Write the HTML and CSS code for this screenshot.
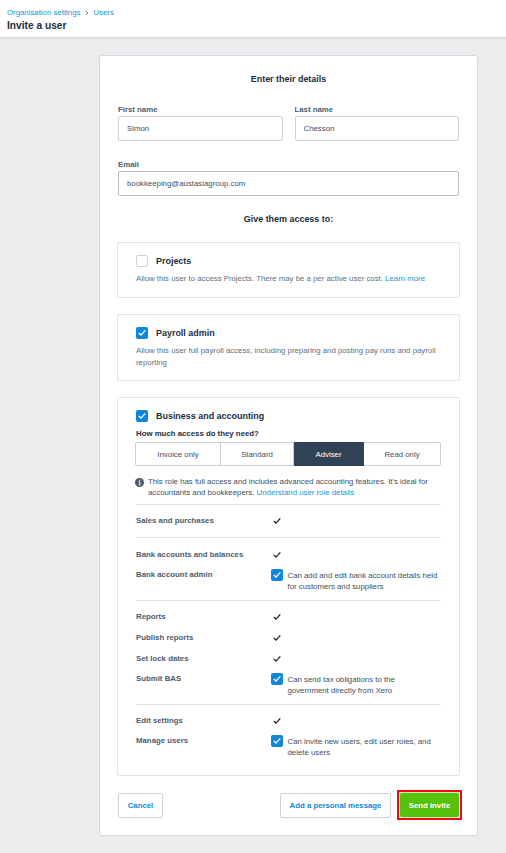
FILE: index.html
```
<!DOCTYPE html>
<html lang="en">
<head>
    <meta charset="UTF-8">
    <meta name="viewport" content="width=device-width, initial-scale=1">
    <title>Invite a user</title>
    <link rel="stylesheet" href="styles.css">
</head>
<body>
    <svg class="symbols" width="0" height="0">
        <symbol id="tick" viewBox="0 0 12 12">
            <path d="M2.8 6.1 L5 8.1 L9.3 3.4" fill="none" stroke="currentColor" stroke-width="1.4"/>
        </symbol>
    </svg>

    <header>
        <nav class="breadcrumb">
            <a href="#">Organisation settings</a>
            <svg class="chevron" viewBox="0 0 4 6"><path d="M1 1 L3 3 L1 5" fill="none" stroke="currentColor" stroke-width="0.8"/></svg>
            <a href="#">Users</a>
        </nav>
        <h1>Invite a user</h1>
    </header>

    <main class="card">
        <h2>Enter their details</h2>

        <div class="name-row">
            <div class="field">
                <label for="firstName">First name</label>
                <input type="text" id="firstName" value="Simon">
            </div>
            <div class="field">
                <label for="lastName">Last name</label>
                <input type="text" id="lastName" value="Chesson">
            </div>
        </div>
        <div class="field email-field">
            <label for="email">Email</label>
            <input type="text" id="email" value="bookkeeping@austasiagroup.com">
        </div>

        <h2 class="access-title">Give them access to:</h2>

        <section class="box projects">
            <div class="box-title">
                <span class="checkbox"></span>
                <h3>Projects</h3>
            </div>
            <p>Allow this user to access Projects. There may be a per active user cost. <a href="#">Learn more</a></p>
        </section>

        <section class="box payroll">
            <div class="box-title">
                <span class="checkbox checked"><svg><use href="#tick"/></svg></span>
                <h3>Payroll admin</h3>
            </div>
            <p>Allow this user full payroll access, including preparing and posting pay runs and payroll<br>reporting</p>
        </section>

        <section class="box business">
            <div class="box-title">
                <span class="checkbox checked"><svg><use href="#tick"/></svg></span>
                <h3>Business and accounting</h3>
            </div>
            <h4>How much access do they need?</h4>
            <div class="roles">
                <button>Invoice only</button>
                <button>Standard</button>
                <button class="active">Adviser</button>
                <button>Read only</button>
            </div>
            <div class="info">
                <svg class="info-icon" viewBox="0 0 9 9">
                    <circle cx="4.5" cy="4.5" r="4.5" fill="#4a5a6b"/>
                    <path d="M3.6 3.9 H4.9 V6.7 M3.5 6.8 H5.7 M4 2.3 H5.1" fill="none" stroke="#fff" stroke-width="1"/>
                </svg>
                <div>This role has full access and includes advanced accounting features. It's ideal for<br>accountants and bookkeepers. <a href="#">Understand user role details</a></div>
            </div>

            <div class="group sales">
                <div class="row"><b>Sales and purchases</b><svg class="tick"><use href="#tick"/></svg></div>
            </div>
            <div class="group bank">
                <div class="row"><b>Bank accounts and balances</b><svg class="tick"><use href="#tick"/></svg></div>
                <div class="row option">
                    <b>Bank account admin</b>
                    <span class="checkbox checked"><svg><use href="#tick"/></svg></span>
                    <span class="option-text">Can add and edit bank account details held<br>for customers and suppliers</span>
                </div>
            </div>
            <div class="group reports">
                <div class="row"><b>Reports</b><svg class="tick"><use href="#tick"/></svg></div>
                <div class="row"><b>Publish reports</b><svg class="tick"><use href="#tick"/></svg></div>
                <div class="row"><b>Set lock dates</b><svg class="tick"><use href="#tick"/></svg></div>
                <div class="row option">
                    <b>Submit BAS</b>
                    <span class="checkbox checked"><svg><use href="#tick"/></svg></span>
                    <span class="option-text">Can send tax obligations to the<br>government directly from Xero</span>
                </div>
            </div>
            <div class="group">
                <div class="row"><b>Edit settings</b><svg class="tick"><use href="#tick"/></svg></div>
                <div class="row option">
                    <b>Manage users</b>
                    <span class="checkbox checked"><svg><use href="#tick"/></svg></span>
                    <span class="option-text">Can invite new users, edit user roles, and<br>delete users</span>
                </div>
            </div>
        </section>

        <div class="actions">
            <button class="btn cancel">Cancel</button>
            <button class="btn message">Add a personal message</button>
            <div class="highlight"><button class="btn send">Send invite</button></div>
        </div>
    </main>
</body>
</html>
```

FILE: styles.css
```
* {
    box-sizing: border-box;
}

body {
    margin: 0;
    height: 853px;
    overflow: hidden;
    background-color: #ebecee;
    font-family: "Liberation Sans", Arial, sans-serif;
    font-size: 7.82px;
    color: #405063;
}

h1, h2, h3, h4, p {
    margin: 0;
}

a {
    color: #1297e0;
    text-decoration: none;
}

button, input {
    font-family: inherit;
}

.symbols {
    position: absolute;
}

header {
    height: 38px;
    padding: 7px 7px 0;
    background-color: #fff;
    border-bottom: 1px solid #d3d8dd;
    box-shadow: 0 1px 1px #e0e3e6;
}

.breadcrumb {
    display: flex;
    align-items: center;
    height: 11px;
}

.chevron {
    width: 4px;
    height: 6px;
    margin: 0 4.5px;
    color: #5c6b7a;
}

h1 {
    margin-top: 1px;
    font-size: 10.2px;
    line-height: 13px;
    color: #1b2c41;
}

.card {
    width: 379px;
    height: 781px;
    margin: 17px 0 0 99px;
    padding: 16px 17px 0;
    background-color: #fff;
    border: 1px solid #d6dade;
    border-radius: 3px;
}

h2 {
    font-size: 8.95px;
    line-height: 14px;
    text-align: center;
    color: #1b2c41;
}

.name-row {
    display: grid;
    grid-template-columns: 1fr 1fr;
    gap: 12px;
    margin: 18px 1px 0;
}

.field label {
    display: block;
    height: 12px;
    line-height: 12px;
    font-weight: bold;
    color: #4c5c6e;
}

.field input {
    display: block;
    width: 100%;
    height: 25px;
    padding: 0 8px;
    border: 1px solid #cdd3d9;
    border-radius: 2px;
    background: #fff;
    font-size: 7.82px;
    color: #405063;
}

.email-field {
    margin: 18px 1px 0;
}

.email-field input {
    border-color: #b5bec8;
}

.access-title {
    margin-top: 16px;
}

.box {
    padding: 11px 18px 0;
    border: 1px solid #e1e4e7;
    border-radius: 2px;
}

.projects {
    height: 56px;
    margin-top: 16px;
}

.payroll {
    height: 67px;
    margin-top: 16px;
}

.business {
    height: 379px;
    margin-top: 16px;
}

.box-title {
    display: flex;
    align-items: center;
    height: 14px;
    gap: 8px;
}

h3 {
    font-size: 8.95px;
    color: #1b2c41;
}

.box p {
    margin-top: 5px;
    line-height: 12px;
    color: #627081;
    white-space: nowrap;
}

.checkbox {
    flex: none;
    width: 12px;
    height: 12px;
    border: 1px solid #cdd3d9;
    border-radius: 2px;
}

.checkbox.checked {
    border: none;
    background-color: #0f87dc;
    color: #fff;
}

.checkbox svg {
    display: block;
    width: 12px;
    height: 12px;
}

h4 {
    margin-top: 5px;
    font-size: 7.82px;
    line-height: 12px;
    color: #1b2c41;
}

.roles {
    display: grid;
    grid-template-columns: 85px 73px 70px 1fr;
    height: 24px;
    margin: 2px 0 0 -1px;
    border: 1px solid #c8cfd6;
    border-radius: 2px;
}

.roles button {
    padding: 0;
    border: none;
    border-right: 1px solid #c8cfd6;
    background: none;
    font-size: 7.82px;
    color: #405063;
}

.roles button:last-child {
    border-right: none;
}

.roles .active {
    margin: -1px 0;
    background-color: #2f4256;
    border-color: #2f4256;
    color: #fff;
}

.info {
    display: flex;
    gap: 4px;
    height: 38px;
    margin-left: -1px;
    padding-top: 10px;
    line-height: 11.4px;
    white-space: nowrap;
}

.info-icon {
    flex: none;
    width: 9px;
    height: 9px;
    margin-top: 2px;
}

.group {
    padding: 5px 0;
    border-top: 1px solid #dfe3e7;
}

.sales {
    padding-bottom: 6px;
}

.bank {
    padding: 6px 0 4px;
}

.reports {
    padding-bottom: 4px;
}

.row {
    display: grid;
    grid-template-columns: 135px 12px 1fr;
    align-items: center;
    height: 21px;
    color: #4c5c6e;
}

.tick {
    width: 12px;
    height: 12px;
    color: #1b2c41;
}

.option {
    align-items: start;
    height: 31px;
    padding-top: 4px;
    line-height: 12px;
}

.option-text {
    padding: 1px 0 0 4.5px;
    line-height: 11.4px;
    color: #405063;
    white-space: nowrap;
}

.actions {
    display: flex;
    align-items: center;
    height: 30px;
    margin: 14px -2px 0 1px;
}

.btn {
    height: 25px;
    padding: 0;
    border: 1px solid #ccd3da;
    border-radius: 2px;
    background-color: #fff;
    font-size: 7.8px;
    font-weight: bold;
    color: #0f87dc;
}

.cancel {
    width: 45px;
}

.message {
    width: 111px;
    margin: 0 6px 0 auto;
}

.highlight {
    height: 30px;
    padding: 1px;
    border: 2px solid #f5051c;
    background-color: #c9f0b0;
}

.send {
    display: block;
    width: 59px;
    height: 24px;
    border: none;
    background-color: #56c20c;
    color: #fff;
}
```
